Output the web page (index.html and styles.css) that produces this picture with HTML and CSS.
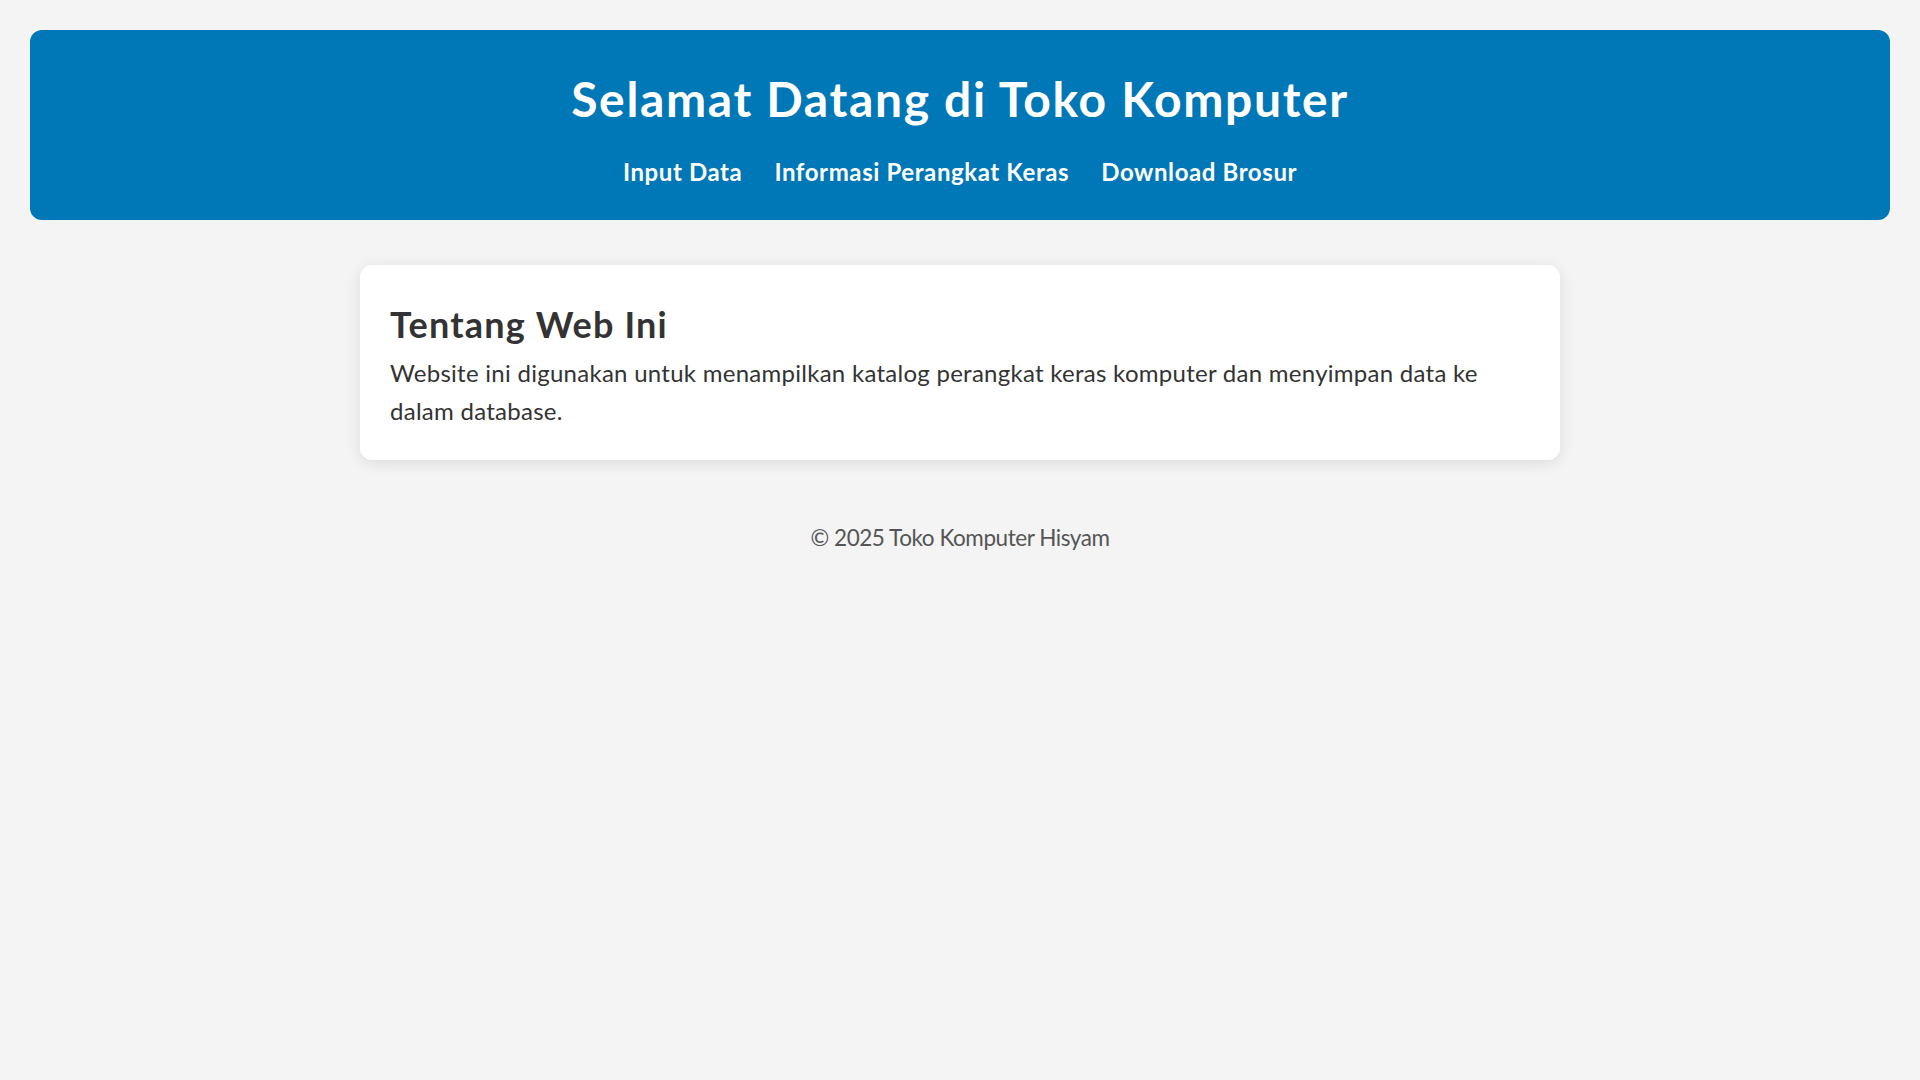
FILE: index.html
```html
<!DOCTYPE html>
<html lang="id">
<head>
<meta charset="utf-8">
<title>Toko Komputer</title>
<link rel="stylesheet" href="styles.css">
</head>
<body>
<header class="site-header">
  <h1 class="site-title">Selamat Datang di Toko Komputer</h1>
  <nav class="site-nav">
    <a href="#">Input Data</a>
    <a href="#">Informasi Perangkat Keras</a>
    <a href="#">Download Brosur</a>
  </nav>
</header>
<main class="content">
  <section class="card">
    <h2 class="card-title">Tentang Web Ini</h2>
    <p class="card-text">Website ini digunakan untuk menampilkan katalog perangkat keras komputer dan menyimpan data ke dalam database.</p>
  </section>
</main>
<footer class="site-footer">
  <p>&copy; 2025 Toko Komputer Hisyam</p>
</footer>
</body>
</html>
```
FILE: styles.css
```css
* { box-sizing: border-box; }

html, body {
  margin: 0;
  padding: 0;
}

body {
  background: #f4f4f4;
  color: #333;
  font-family: Lato, "Open Sans", sans-serif;
  font-size: 24px;
  line-height: 1.6;
}

.site-header {
  margin: 30px 30px 0;
  padding: 31px 30px 29px;
  background: #0077b6;
  color: #fff;
  border-radius: 12px;
  text-align: center;
}

.site-title {
  margin: 0 0 15px;
  font-size: 48px;
  font-weight: 700;
  line-height: 1.6;
  letter-spacing: 1.65px;
}

.site-nav {
  display: flex;
  justify-content: center;
  gap: 32px;
}

.site-nav a {
  color: #fff;
  text-decoration: none;
  font-weight: 700;
  letter-spacing: 0.6px;
}

.content {
  max-width: 1200px;
  margin: 45px auto 0;
}

.card {
  background: #fff;
  border-radius: 12px;
  padding: 31px 30px 29px;
  box-shadow: 0 3px 15px rgba(0, 0, 0, 0.1);
}

.card-title {
  margin: 0;
  font-size: 36px;
  font-weight: 700;
  line-height: 1.6;
  letter-spacing: 1.2px;
}

.card-text {
  margin: 0;
  letter-spacing: 0.27px;
}

.site-footer {
  margin-top: 59px;
  text-align: center;
  color: #555;
  font-size: 22.5px;
  line-height: 38.4px;
  letter-spacing: -0.45px;
}

.site-footer p {
  margin: 0;
}
```
